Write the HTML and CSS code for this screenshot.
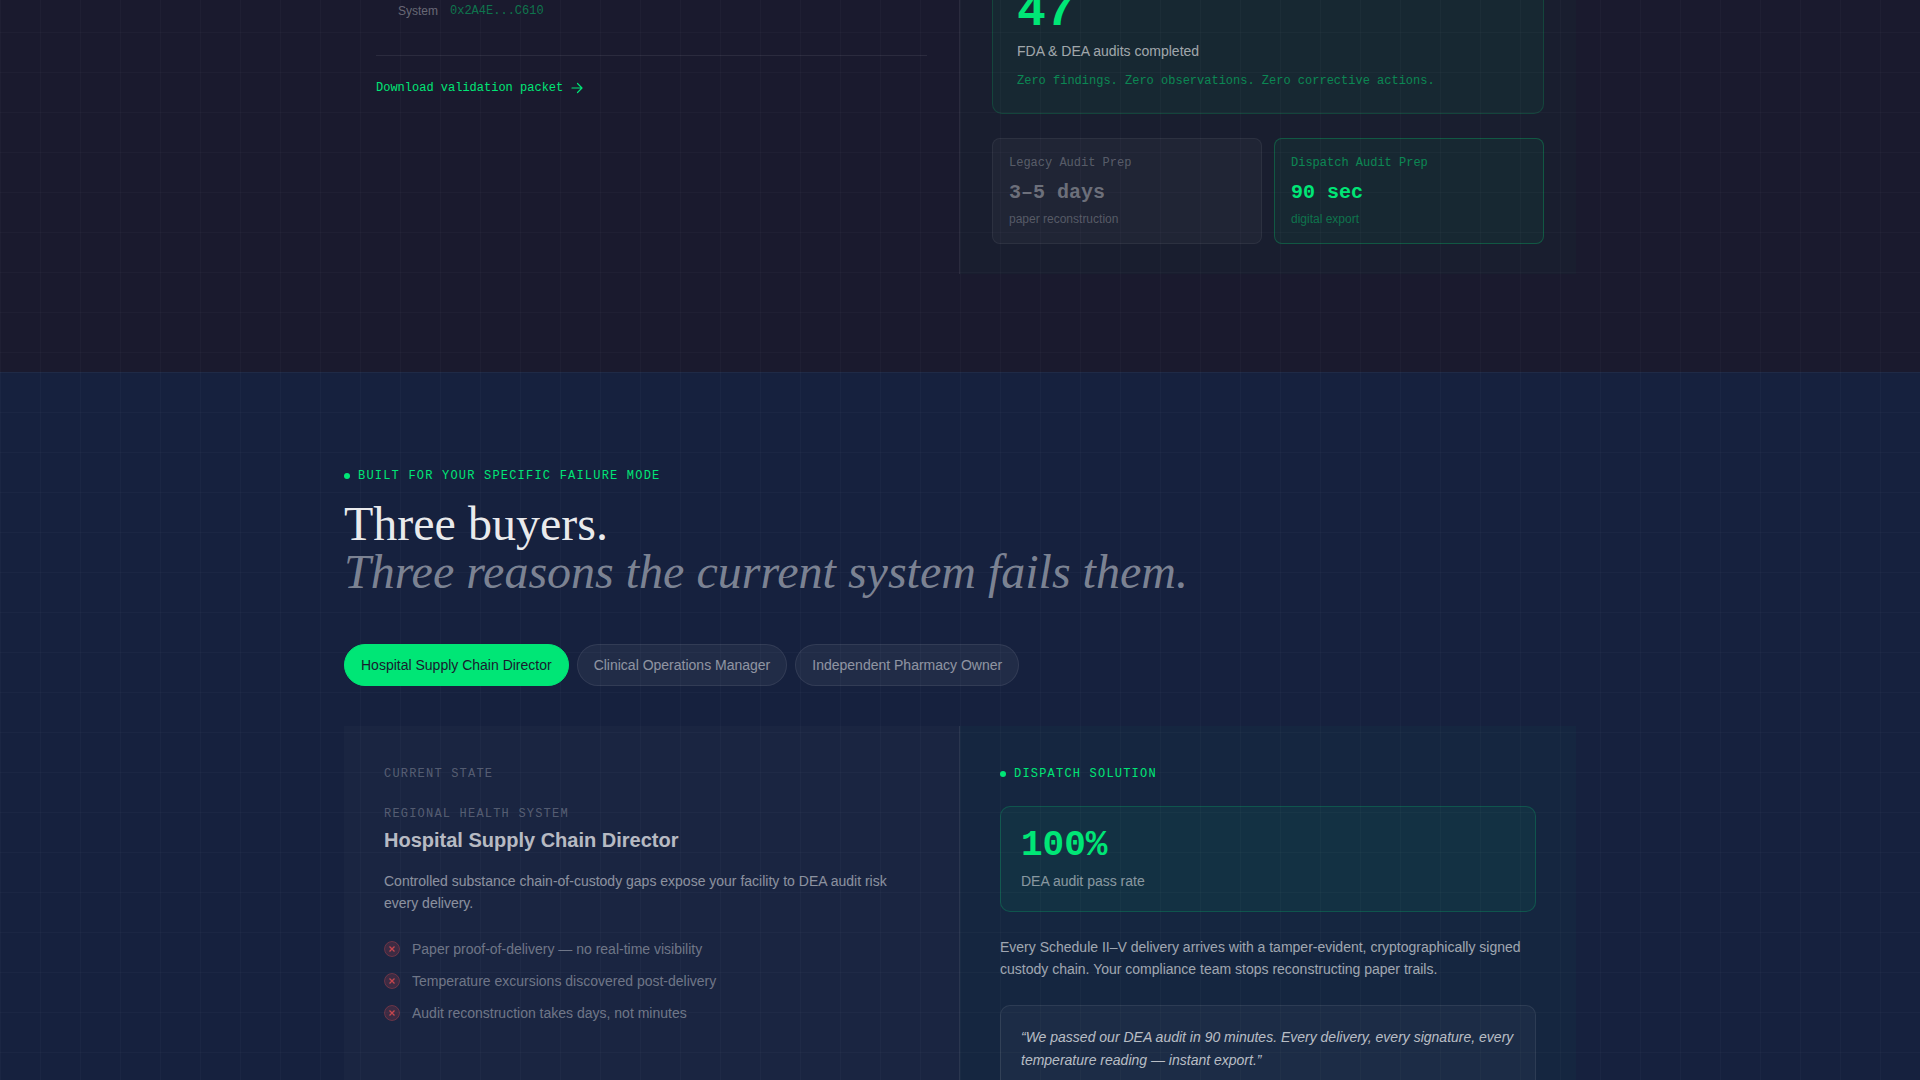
FILE: index.html
```html
<!DOCTYPE html>
<html lang="en">
<head>
  <meta charset="UTF-8">
  <meta name="viewport" content="width=device-width, initial-scale=1.0">
  <title>Dispatch</title>
  <link rel="stylesheet" href="styles.css">
</head>
<body>
  <section class="compliance">
    <div class="split">
      <div class="pane">
        <div class="hash-row">
          <span>System</span>
          <code>0x2A4E...C610</code>
        </div>
        <div class="packet">
          <a href="#packet">
            Download validation packet
            <svg width="12" height="12" viewBox="0 0 12 12" fill="none" stroke="currentColor" stroke-width="1.2" stroke-linecap="round" stroke-linejoin="round"><path d="M1 6h10M6.5 1.5L11 6l-4.5 4.5"/></svg>
          </a>
        </div>
      </div>
      <div class="pane pane-green">
        <div class="audit-card">
          <div class="audit-number">47</div>
          <div class="audit-label">FDA &amp; DEA audits completed</div>
          <div class="audit-note">Zero findings. Zero observations. Zero corrective actions.</div>
        </div>
        <div class="prep-grid">
          <div class="prep">
            <div class="prep-title">Legacy Audit Prep</div>
            <div class="prep-value">3–5 days</div>
            <div class="prep-sub">paper reconstruction</div>
          </div>
          <div class="prep prep-green">
            <div class="prep-title">Dispatch Audit Prep</div>
            <div class="prep-value">90 sec</div>
            <div class="prep-sub">digital export</div>
          </div>
        </div>
      </div>
    </div>
  </section>

  <section class="buyers">
    <div class="container">
      <div class="eyebrow"><i class="dot"></i>Built for your specific failure mode</div>
      <h2>Three buyers.<br><em>Three reasons the current system fails them.</em></h2>

      <div class="tabs">
        <button class="tab active">Hospital Supply Chain Director</button>
        <button class="tab">Clinical Operations Manager</button>
        <button class="tab">Independent Pharmacy Owner</button>
      </div>

      <div class="persona">
        <div class="current">
          <div class="eyebrow muted">Current state</div>
          <div class="eyebrow muted org">Regional Health System</div>
          <h3>Hospital Supply Chain Director</h3>
          <p>Controlled substance chain-of-custody gaps expose your facility to DEA audit risk every delivery.</p>
          <ul class="pains">
            <li><svg class="cross" viewBox="0 0 16 16"><circle cx="8" cy="8" r="7.5"/><path d="M5.5 5.5l5 5M10.5 5.5l-5 5"/></svg>Paper proof-of-delivery — no real-time visibility</li>
            <li><svg class="cross" viewBox="0 0 16 16"><circle cx="8" cy="8" r="7.5"/><path d="M5.5 5.5l5 5M10.5 5.5l-5 5"/></svg>Temperature excursions discovered post-delivery</li>
            <li><svg class="cross" viewBox="0 0 16 16"><circle cx="8" cy="8" r="7.5"/><path d="M5.5 5.5l5 5M10.5 5.5l-5 5"/></svg>Audit reconstruction takes days, not minutes</li>
          </ul>
        </div>
        <div class="solution">
          <div class="eyebrow"><i class="dot"></i>Dispatch solution</div>
          <div class="stat">
            <div class="stat-number">100%</div>
            <div class="stat-label">DEA audit pass rate</div>
          </div>
          <p>Every Schedule II–V delivery arrives with a tamper-evident, cryptographically signed custody chain. Your compliance team stops reconstructing paper trails.</p>
          <blockquote>“We passed our DEA audit in 90 minutes. Every delivery, every signature, every temperature reading — instant export.”</blockquote>
        </div>
      </div>
    </div>
  </section>
</body>
</html>
```
FILE: styles.css
```css
* {
  box-sizing: border-box;
  margin: 0;
  padding: 0;
}
:root {
  --green: #00e676;
  --line: rgba(255, 255, 255, 0.025);
  --mono: "Liberation Mono", monospace;
}
html {
  overflow: hidden;
}
body {
  height: 100vh;
  overflow: hidden;
  background: #1a1a2e;
  color: white;
  font-family: "Liberation Sans", sans-serif;
  font-size: 14px;
  line-height: 20px;
}
.compliance,
.buyers {
  background-image:
    linear-gradient(var(--line) 1px, transparent 1px),
    linear-gradient(90deg, var(--line) 1px, transparent 1px);
  background-size: 40px 40px;
}
.compliance {
  background-position: 0 32px;
  padding-bottom: 98px;
}
.split,
.container {
  max-width: 1232px;
  margin: 0 auto;
}
.split,
.persona {
  display: grid;
  grid-template-columns: 1fr 1fr;
}
.pane {
  border-right: 1px solid rgba(255, 255, 255, 0.08);
  padding: 0 32px 30px;
}
.pane-green {
  border-right: 0;
  background: rgba(0, 230, 118, 0.02);
}
.hash-row {
  display: flex;
  gap: 12px;
  padding: 1px 0 34px 22px;
  font-size: 12px;
  color: rgba(255, 255, 255, 0.35);
}
.hash-row code {
  font-family: var(--mono);
  color: rgba(0, 230, 118, 0.45);
}
.packet {
  border-top: 1px solid rgba(255, 255, 255, 0.08);
  padding-top: 20px;
}
.packet a {
  display: inline-flex;
  align-items: center;
  gap: 8px;
  font: 12px/24px var(--mono);
  color: var(--green);
  text-decoration: none;
}
.audit-card {
  border: 1px solid rgba(0, 230, 118, 0.15);
  border-top: 0;
  border-radius: 0 0 10px 10px;
  background: rgba(0, 230, 118, 0.05);
  padding: 0 24px 22px;
}
.audit-number {
  height: 41px;
  font: bold 48px/24px var(--mono);
  color: var(--green);
}
.audit-label {
  margin-bottom: 10px;
  color: rgba(255, 255, 255, 0.6);
}
.audit-note {
  font: 12px/20px var(--mono);
  color: rgba(0, 230, 118, 0.5);
}
.prep-grid {
  display: grid;
  grid-template-columns: 1fr 1fr;
  gap: 12px;
  margin-top: 24px;
}
.prep {
  border: 1px solid rgba(255, 255, 255, 0.06);
  border-radius: 8px;
  background: rgba(255, 255, 255, 0.03);
  padding: 16px 16px 14px;
  color: rgba(255, 255, 255, 0.27);
}
.prep-title {
  margin-bottom: 8px;
  font: 12px/16px var(--mono);
}
.prep-value {
  margin-bottom: 2px;
  font: bold 20px/28px var(--mono);
  color: rgba(255, 255, 255, 0.35);
}
.prep-sub {
  font-size: 12px;
  color: rgba(255, 255, 255, 0.25);
}
.prep-green {
  border-color: rgba(0, 230, 118, 0.25);
  background: rgba(0, 230, 118, 0.05);
  color: rgba(0, 230, 118, 0.5);
}
.prep-green .prep-value {
  color: var(--green);
}
.prep-green .prep-sub {
  color: rgba(0, 230, 118, 0.4);
}
.buyers {
  background-color: #16213e;
  background-position: 0 -1px;
  border-top: 1px solid rgba(255, 255, 255, 0.02);
  padding: 93px 0;
}
.eyebrow {
  display: flex;
  align-items: center;
  gap: 8px;
  font: 12px/20px var(--mono);
  letter-spacing: 1.2px;
  text-transform: uppercase;
  color: var(--green);
}
.eyebrow.muted {
  color: rgba(255, 255, 255, 0.27);
}
.dot {
  width: 6px;
  height: 6px;
  border-radius: 50%;
  background: var(--green);
}
h2 {
  margin: 14px 0 48px;
  font: 48px/48px "Liberation Serif", serif;
  color: rgba(255, 255, 255, 0.92);
}
h2 em {
  color: rgba(255, 255, 255, 0.45);
}
.tabs {
  display: flex;
  gap: 8px;
  margin-bottom: 40px;
}
.tab {
  border: 1px solid rgba(255, 255, 255, 0.08);
  border-radius: 21px;
  background: rgba(255, 255, 255, 0.05);
  padding: 10px 16px;
  font: 14px/20px "Liberation Sans", sans-serif;
  color: rgba(255, 255, 255, 0.5);
  cursor: pointer;
}
.tab.active {
  border-color: var(--green);
  background: var(--green);
  color: #1a1a2e;
}
.current,
.solution {
  padding: 38px 40px 60px;
}
.current {
  background: rgba(255, 255, 255, 0.02);
  border-right: 1px solid rgba(255, 255, 255, 0.08);
}
.solution {
  background: rgba(0, 230, 118, 0.03);
}
.org {
  margin-top: 20px;
}
h3 {
  margin: 2px 0 16px;
  font-size: 20px;
  line-height: 28px;
  color: rgba(255, 255, 255, 0.7);
}
p {
  margin-bottom: 25px;
  line-height: 22px;
  color: rgba(255, 255, 255, 0.5);
}
.pains {
  list-style: none;
}
.pains li {
  display: flex;
  align-items: center;
  gap: 12px;
  margin-bottom: 12px;
  color: rgba(255, 255, 255, 0.38);
}
.cross {
  width: 16px;
  height: 16px;
  fill: rgba(255, 82, 82, 0.15);
  stroke: rgba(255, 82, 82, 0.3);
}
.cross path {
  stroke: rgba(255, 82, 82, 0.7);
  stroke-width: 1.3;
}
.stat {
  margin: 22px 0 24px;
  border: 1px solid rgba(0, 230, 118, 0.2);
  border-radius: 10px;
  background: rgba(0, 230, 118, 0.06);
  padding: 20px;
}
.stat-number {
  margin-bottom: 6px;
  font: bold 36px/38px var(--mono);
  color: var(--green);
}
.stat-label {
  color: rgba(255, 255, 255, 0.5);
}
.solution p {
  color: rgba(255, 255, 255, 0.6);
}
blockquote {
  border: 1px solid rgba(255, 255, 255, 0.08);
  border-radius: 10px;
  background: rgba(255, 255, 255, 0.03);
  padding: 20px;
  font-style: italic;
  line-height: 23px;
  color: rgba(255, 255, 255, 0.7);
}
```
